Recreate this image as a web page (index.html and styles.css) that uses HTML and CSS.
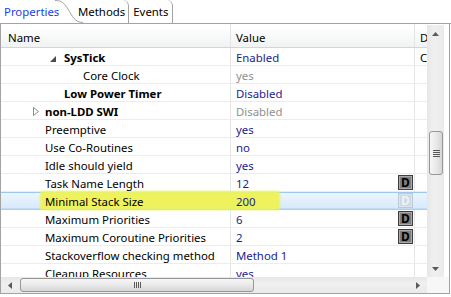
FILE: index.html
```html
<!DOCTYPE html>
<html lang="en">
  <head>
    <meta charset="UTF-8" />
    <title>Properties</title>
    <link rel="stylesheet" href="styles.css">
  </head>
  <body>
    <div class="view">
      <div class="tabs">
        <div class="tab tab-active">Properties</div>
        <svg class="tab-curve" width="22" height="23" viewBox="0 0 22 23">
          <path d="M0 0.5 C7 0.5 9 3 13 9 C17 16 20 22.5 28 22.5" fill="none" stroke="#a3a3a3" />
        </svg>
        <div class="tab tab-methods">Methods</div>
        <div class="tab">Events</div>
      </div>

      <div class="panel">
        <div class="grid-area">
          <div class="table">
            <div class="row head">
              <div class="cell name">Name</div>
              <div class="cell value">Value</div>
              <div class="cell extra">Details</div>
            </div>

            <div class="row">
              <div class="cell name l2 bold">
                <span class="expander">
                  <svg width="6" height="6" viewBox="0 0 6 6"><path d="M6 0 L6 6 L0 6 Z" fill="#4a4a4a" /></svg>
                </span>SysTick
              </div>
              <div class="cell value">Enabled</div>
              <div class="cell extra">C</div>
            </div>
            <div class="row">
              <div class="cell name l3">Core Clock</div>
              <div class="cell value off">yes</div>
              <div class="cell extra"></div>
            </div>
            <div class="row">
              <div class="cell name l2 bold">Low Power Timer</div>
              <div class="cell value">Disabled</div>
              <div class="cell extra"></div>
            </div>
            <div class="row">
              <div class="cell name l1 bold">
                <span class="expander">
                  <svg width="6" height="9" viewBox="0 0 6 9"><path d="M0.5 0.5 L5.5 4.5 L0.5 8.5 Z" fill="#fff" stroke="#8a8a8a" /></svg>
                </span>non-LDD SWI
              </div>
              <div class="cell value off">Disabled</div>
              <div class="cell extra"></div>
            </div>
            <div class="row">
              <div class="cell name l1">Preemptive</div>
              <div class="cell value">yes</div>
              <div class="cell extra"></div>
            </div>
            <div class="row">
              <div class="cell name l1">Use Co-Routines</div>
              <div class="cell value">no</div>
              <div class="cell extra"></div>
            </div>
            <div class="row">
              <div class="cell name l1">Idle should yield</div>
              <div class="cell value">yes</div>
              <div class="cell extra"></div>
            </div>
            <div class="row">
              <div class="cell name l1">Task Name Length</div>
              <div class="cell value">12<span class="dbtn">D</span></div>
              <div class="cell extra"></div>
            </div>
            <div class="row selected">
              <span class="marker"></span>
              <div class="cell name l1">Minimal Stack Size</div>
              <div class="cell value">200<span class="dbtn faded">D</span></div>
              <div class="cell extra"></div>
            </div>
            <div class="row">
              <div class="cell name l1">Maximum Priorities</div>
              <div class="cell value">6<span class="dbtn">D</span></div>
              <div class="cell extra"></div>
            </div>
            <div class="row">
              <div class="cell name l1">Maximum Coroutine Priorities</div>
              <div class="cell value">2<span class="dbtn">D</span></div>
              <div class="cell extra"></div>
            </div>
            <div class="row">
              <div class="cell name l1">Stackoverflow checking method</div>
              <div class="cell value">Method 1</div>
              <div class="cell extra"></div>
            </div>
            <div class="row">
              <div class="cell name l1">Cleanup Resources</div>
              <div class="cell value">yes</div>
              <div class="cell extra"></div>
            </div>
          </div>

          <div class="vscroll">
            <div class="arrow-box">
              <svg width="7" height="4" viewBox="0 0 7 4"><path d="M3.5 0 L7 4 L0 4 Z" fill="#5a5a5a" /></svg>
            </div>
            <div class="vtrack">
              <div class="vthumb"><span class="grip-h"></span></div>
            </div>
            <div class="arrow-box">
              <svg width="7" height="4" viewBox="0 0 7 4"><path d="M0 0 L7 0 L3.5 4 Z" fill="#5a5a5a" /></svg>
            </div>
          </div>
          <div class="gutter"></div>
        </div>

        <div class="hscroll-row">
          <div class="hscroll">
            <div class="arrow-box">
              <svg width="4" height="7" viewBox="0 0 4 7"><path d="M0 3.5 L4 0 L4 7 Z" fill="#5a5a5a" /></svg>
            </div>
            <div class="htrack">
              <div class="hthumb"><span class="grip-v"></span></div>
            </div>
            <div class="arrow-box">
              <svg width="4" height="7" viewBox="0 0 4 7"><path d="M0 0 L4 3.5 L0 7 Z" fill="#5a5a5a" /></svg>
            </div>
          </div>
          <div class="corner"></div>
        </div>
      </div>
    </div>
  </body>
</html>
```

FILE: styles.css
```css
body {
  margin: 0;
  background-color: #fff;
  font-family: 'Segoe UI', 'Noto Sans', 'Open Sans', sans-serif;
  font-size: 11.4px;
  color: #000;
}
.view {
  width: 451px;
  height: 297px;
  overflow: hidden;
}

/* tabs */
.tabs {
  display: flex;
  height: 23px;
  border-bottom: 1px solid #a3a3a3;
}
.tab {
  display: flex;
  align-items: center;
  height: 23px;
  padding: 0 4px;
  white-space: nowrap;
}
.tab-active {
  width: 51px;
  padding-right: 0;
  color: #2140e8;
}
.tab-curve {
  overflow: visible;
  flex: none;
}
.tab-methods {
  padding-left: 1px;
  padding-right: 3px;
}
.tab-methods,
.tab-methods + .tab {
  border-right: 1px solid #a3a3a3;
  border-top-right-radius: 6px;
}

/* panel */
.panel {
  width: 448px;
  height: 269px;
  border: 1px solid #a3a3a3;
  border-top: none;
  display: flex;
  flex-direction: column;
}
.grid-area {
  display: flex;
  height: 253px;
}
.table {
  width: 426px;
  overflow: hidden;
}
.row {
  display: grid;
  grid-template-columns: 230px 184px 12px;
  height: 17px;
  border-bottom: 1px solid #ececec;
  position: relative;
}
.cell {
  display: flex;
  align-items: center;
  padding-top: 2px;
  border-right: 1px solid #e6e6e6;
  white-space: nowrap;
  overflow: hidden;
  position: relative;
  z-index: 1;
}
.head {
  height: 23px;
  border-bottom: 1px solid #d5d5d5;
  background: linear-gradient(#ffffff, #ffffff 15%, #f1f2f3);
}
.head .cell {
  padding-top: 4px;
  color: #000;
  border-right-color: #e3e3e3;
}
.head .name {
  padding-left: 7px;
}
.value {
  padding-left: 5px;
  color: #1d1a92;
}
.value.off {
  color: #8f8f8f;
}
.extra {
  padding-left: 5px;
  border-right: none;
}
.bold {
  font-weight: bold;
}
.l1 {
  padding-left: 44px;
}
.l2 {
  padding-left: 63px;
}
.l3 {
  padding-left: 82px;
}
.l1 .expander,
.l2 .expander {
  width: 12px;
  margin-left: -12px;
  display: flex;
  align-items: center;
}
.l2 .expander {
  margin-left: -14px;
  width: 14px;
  padding-top: 2px;
}

/* D buttons */
.dbtn {
  margin-left: auto;
  margin-right: 1px;
  margin-top: -2px;
  width: 13px;
  height: 13px;
  border: 1px solid #3e3e3e;
  background-color: #7f7f7f;
  box-shadow: inset 0 0 0 1px #a9a9a9;
  color: #000;
  font-weight: bold;
  font-size: 12px;
  line-height: 13px;
  text-align: center;
}
.dbtn.faded {
  border-color: #bccad8;
  background-color: #cdd9e5;
  box-shadow: inset 0 0 0 1px #dde6ef;
  color: #eef3f8;
}

/* selection + marker */
.selected {
  background: linear-gradient(#eef6fe, #d6e9fc);
  box-shadow: inset 0 1px #9cc8ef, inset 0 -1px #c1dcf5;
  border-bottom-color: #a9cff2;
}
.selected .cell {
  border-right-color: transparent;
}
.marker {
  position: absolute;
  left: 39px;
  top: -1px;
  width: 240px;
  height: 19px;
  background-color: #eef35d;
  border-radius: 3px;
  filter: blur(0.8px);
  z-index: 0;
}

/* scroll bars */
.vscroll {
  width: 17px;
  margin-top: 1px;
  display: flex;
  flex-direction: column;
  background: linear-gradient(90deg, #e6e6e6, #f0f0f0 40%, #eaeaea);
}
.gutter {
  flex: 1;
}
.arrow-box {
  display: flex;
  align-items: center;
  justify-content: center;
  width: 17px;
  height: 17px;
  flex: none;
}
.vtrack {
  flex: 1;
  padding-top: 89px;
}
.vthumb {
  width: 12px;
  height: 42px;
  margin-left: 2px;
  border: 1px solid #979797;
  border-radius: 3px;
  background: linear-gradient(90deg, #f6f6f6, #e9e9e9 50%, #d6d6d6);
  display: flex;
  align-items: center;
  justify-content: center;
}
.grip-h {
  width: 7px;
  height: 7px;
  background: repeating-linear-gradient(#5a5a5a 0 1px, transparent 1px 2px);
}
.hscroll-row {
  display: flex;
  height: 16px;
}
.hscroll {
  width: 426px;
  display: flex;
  background: linear-gradient(#e6e6e6, #f0f0f0 40%, #eaeaea);
}
.hscroll .arrow-box {
  width: 18px;
  height: 16px;
}
.htrack {
  flex: 1;
  padding-top: 1px;
}
.hthumb {
  width: 232px;
  height: 12px;
  margin-left: 1px;
  border: 1px solid #979797;
  border-radius: 3px;
  background: linear-gradient(#f6f6f6, #e9e9e9 50%, #d6d6d6);
  display: flex;
  align-items: center;
  justify-content: center;
}
.grip-v {
  width: 7px;
  height: 6px;
  background: repeating-linear-gradient(90deg, #5a5a5a 0 1px, transparent 1px 2px);
}
.corner {
  flex: 1;
  background-color: #f7f7f7;
}
```
